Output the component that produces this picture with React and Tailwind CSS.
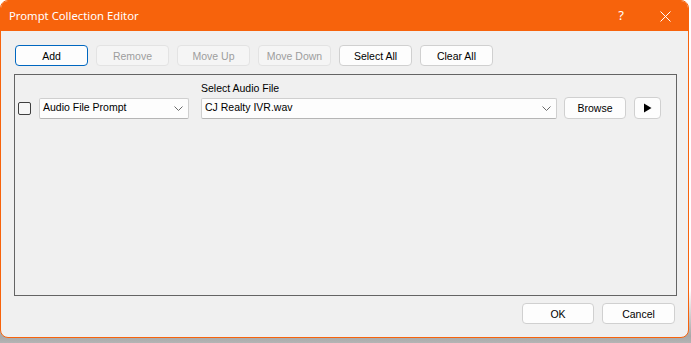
import React from 'react';

const font = { fontFamily: '"Liberation Sans", Arial, sans-serif' };

const Btn = ({ children, disabled, focused, className = '' }) => (
  <button
    disabled={disabled}
    className={
      'rounded-[4px] border text-[10.5px] leading-none flex items-center justify-center pt-[1px] ' +
      (disabled
        ? 'bg-[#f5f5f5] border-[#e3e3e3] text-[#9d9d9d] '
        : focused
        ? 'bg-[#fdfdfd] border-[#0067c0] text-black '
        : 'bg-[#fdfdfd] border-[#d0d0d0] text-black ') +
      className
    }
  >
    {children}
  </button>
);

const Combo = ({ value, className = '' }) => (
  <div
    className={
      'h-[21px] bg-[#fdfdfd] border border-[#cfcfcf] border-b-[#b5b5b5] rounded-[2px] flex items-center justify-between pl-[3px] pr-[5px] text-[10.5px] text-black ' +
      className
    }
  >
    <span>{value}</span>
    <svg width="9" height="5" viewBox="0 0 9 5" fill="none" stroke="#6a6a6a" strokeWidth="1">
      <path d="M0.5 0.5 L4.5 4.5 L8.5 0.5" />
    </svg>
  </div>
);

export default function App() {
  return (
    <div
      className="w-[691px] h-[343px] bg-[linear-gradient(to_bottom,#ffffff_0,#ffffff_290px,#a8a8a8_336px,#b4b4b4_343px)]"
      style={font}
    >
      <div className="w-[689px] h-[338px] rounded-[8px] border border-[#f7630c] overflow-hidden flex flex-col bg-[#f0f0f0]">
        {/* title bar */}
        <div className="h-[30px] bg-[#f7630c] flex items-center text-white shrink-0">
          <span className="pl-[8px] text-[11.3px] pt-[1px]" style={{ fontFamily: '"Noto Sans", "Open Sans", sans-serif' }}>
            Prompt Collection Editor
          </span>
          <div className="ml-auto flex items-center">
            <span className="text-[13px] mr-[36px]" style={{ fontFamily: '"Noto Sans", sans-serif' }}>?</span>
            <svg width="11" height="11" viewBox="0 0 11 11" stroke="white" strokeWidth="1" className="mr-[17px]">
              <path d="M0.5 0.5 L10.5 10.5 M10.5 0.5 L0.5 10.5" />
            </svg>
          </div>
        </div>

        {/* body */}
        <div className="flex-1 flex flex-col pt-[14px] pl-[13px] pr-[13px]">
          <div className="flex gap-[8px] pl-[1px]">
            <Btn focused className="w-[73px] h-[21px]">Add</Btn>
            <Btn disabled className="w-[73px] h-[21px]">Remove</Btn>
            <Btn disabled className="w-[73px] h-[21px]">Move Up</Btn>
            <Btn disabled className="w-[73px] h-[21px]">Move Down</Btn>
            <Btn className="w-[73px] h-[21px]">Select All</Btn>
            <Btn className="w-[73px] h-[21px]">Clear All</Btn>
          </div>

          <div className="mt-[8px] w-[663px] h-[222px] border border-[#646464] pl-[3px] pt-[8px]">
            <div className="flex items-end">
              <div className="w-[13px] h-[13px] border border-[#3f3f3f] rounded-[2px] bg-[#f6f6f6] mb-[4px]" />
              <Combo value="Audio File Prompt" className="ml-[8px] w-[150px]" />
              <div className="ml-[12px] flex flex-col">
                <span className="text-[10.5px] text-black mb-[4px] leading-none">Select Audio File</span>
                <Combo value="CJ Realty IVR.wav" className="w-[356px]" />
              </div>
              <Btn className="ml-[7px] w-[62px] h-[22px]">Browse</Btn>
              <Btn className="ml-[8px] w-[27px] h-[22px]">
                <svg width="9" height="10" viewBox="0 0 9 10">
                  <path d="M1 0.5 L8.5 5 L1 9.5 Z" fill="black" />
                </svg>
              </Btn>
            </div>
          </div>

          <div className="mt-[7px] flex justify-end gap-[8px]">
            <Btn className="w-[72px] h-[21px]">OK</Btn>
            <Btn className="w-[73px] h-[21px]">Cancel</Btn>
          </div>
        </div>
      </div>
    </div>
  );
}
